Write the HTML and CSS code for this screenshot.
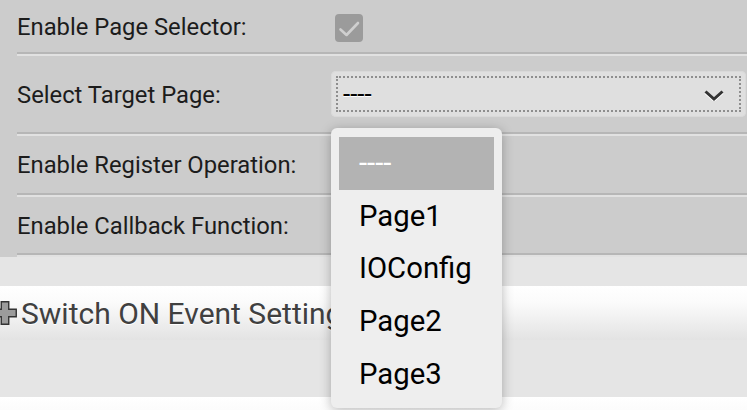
FILE: index.html
```html
<!DOCTYPE html>
<html lang="en">
<head>
<meta charset="utf-8">
<title>Page Selector Settings</title>
<link rel="stylesheet" href="styles.css">
</head>
<body>
<div class="page">
  <section class="panel">
    <div class="row row-first">
      <label class="label">Enable Page Selector:</label>
      <div class="control">
        <span class="checkbox">
          <svg width="28" height="28" viewBox="0 0 28 28"><polyline points="5.5,15.5 11.5,21 23,9" fill="none" stroke="#cfcfcf" stroke-width="2.6" stroke-linecap="round" stroke-linejoin="round"/></svg>
        </span>
      </div>
    </div>
    <hr class="sep">
    <div class="row row-select">
      <label class="label">Select Target Page:</label>
      <div class="control">
        <div class="select">
          <div class="select-focus">
            <span class="select-value">----</span>
            <svg class="chevron" width="20" height="12" viewBox="0 0 20 12">
              <polyline points="1.5,2.5 10,10 18.5,2.5" fill="none" stroke="#fff" stroke-width="3" transform="translate(0 1.2)"/>
              <polyline points="1.5,2.5 10,10 18.5,2.5" fill="none" stroke="#333" stroke-width="3"/>
            </svg>
          </div>
        </div>
      </div>
    </div>
    <hr class="sep">
    <div class="row">
      <label class="label">Enable Register Operation:</label>
      <div class="control"></div>
    </div>
    <hr class="sep">
    <div class="row row-last">
      <label class="label">Enable Callback Function:</label>
      <div class="control"></div>
    </div>
    <hr class="sep">
  </section>

  <div class="spacer"></div>
  <div class="collapsible">
    <h3 class="coll-head">
      <svg class="plus" width="24" height="24" viewBox="0 0 24 24"><path d="M8.25 0.75h7.5v7.5h7.5v7.5h-7.5v7.5h-7.5v-7.5h-7.5v-7.5h7.5z" fill="#9b9b9b" stroke="#333" stroke-width="1.4"/></svg>
      <span>Switch ON Event Setting</span>
    </h3>
  </div>
  <div class="spacer spacer-lg"></div>
  <div class="collapsible">
    <div class="coll-head">
      <svg class="plus" width="24" height="24" viewBox="0 0 24 24"><path d="M8.25 0.75h7.5v7.5h7.5v7.5h-7.5v7.5h-7.5v-7.5h-7.5v-7.5h7.5z" fill="#9b9b9b" stroke="#333" stroke-width="1.4"/></svg>
    </div>
  </div>

  <ul class="menu">
    <li class="menu-item is-selected">----</li>
    <li class="menu-item">Page1</li>
    <li class="menu-item">IOConfig</li>
    <li class="menu-item">Page2</li>
    <li class="menu-item">Page3</li>
  </ul>
</div>
</body>
</html>
```

FILE: styles.css
```css
html, body {
  margin: 0;
  padding: 0;
  overflow: hidden;
  background: #ffffff;
}

body {
  font-family: Roboto, "Liberation Sans", sans-serif;
  width: 747px;
  height: 410px;
}

.page {
  position: relative;
  width: 747px;
  height: 410px;
  overflow: hidden;
}

.panel {
  background: #cccccc;
  padding-left: 17px;
}

.row {
  display: grid;
  grid-template-columns: 314px 1fr;
  align-items: center;
  height: 57px;
}

.row-first { height: 52px; }
.row-select { height: 76px; }
.row-last { height: 56px; }

.label {
  font-size: 23.8px;
  color: #1c1c1c;
  line-height: 29px;
  padding-top: 2px;
}

.control {
  display: flex;
  align-items: center;
  min-width: 0;
}

.sep {
  margin: 0;
  height: 0;
  border: 0;
  border-top: 2px solid #b6b6b6;
  border-bottom: 2px solid #e1e1e1;
}

.checkbox {
  display: block;
  width: 28px;
  height: 28px;
  margin-left: 4px;
  margin-top: 4px;
  border-radius: 4px;
  background: #9b9b9b;
}

.checkbox svg { display: block; }

.select {
  flex: 1;
  height: 46px;
  margin-right: 1px;
  padding: 5px;
  box-sizing: border-box;
  background: #dfdfdf;
  border-radius: 5px;
  box-shadow: inset 0 0 0 1px #d9d9d9;
}

.select-focus {
  height: 100%;
  box-sizing: border-box;
  border: 2px dotted #8e8e8e;
  display: flex;
  align-items: center;
  justify-content: space-between;
  padding: 0 15px 0 5px;
}

.select-value {
  font-size: 26px;
  color: #000;
  text-shadow: 0 1px 0 #fff;
  line-height: 1;
}

.chevron { display: block; margin-top: 2px; }

.spacer {
  height: 29px;
  background: #e5e5e5;
}

.spacer-lg { height: 57px; }

.coll-head {
  margin: 0;
  height: 54px;
  display: flex;
  align-items: center;
  gap: 4px;
  background: linear-gradient(#ffffff 0%, #fbfbfb 30%, #e3e3e3 100%);
  font-size: 30px;
  font-weight: normal;
  color: #404040;
  text-shadow: 0 1px 0 #fff;
}

.plus {
  display: block;
  flex: none;
  margin-left: -7px;
}

.menu {
  position: absolute;
  left: 331px;
  top: 128px;
  width: 171px;
  margin: 0;
  padding: 9px 8px 8px;
  box-sizing: border-box;
  list-style: none;
  background: #eeeeee;
  border-radius: 6px;
  box-shadow: 0 2px 12px rgba(0, 0, 0, 0.28);
}

.menu-item {
  height: 52.6px;
  display: flex;
  align-items: center;
  padding-left: 20px;
  font-size: 29.3px;
  color: #000;
}

.menu-item.is-selected {
  background: #b3b3b3;
  color: #fff;
}
```
